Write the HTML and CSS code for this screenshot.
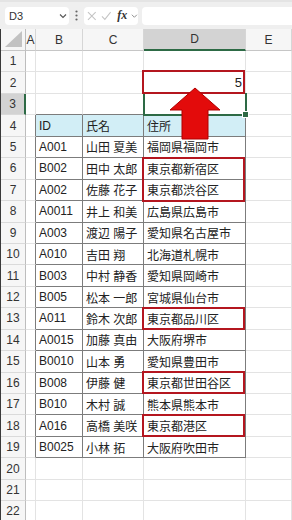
FILE: index.html
```html
<!DOCTYPE html>
<html lang="ja">
<head>
    <meta charset="UTF-8">
    <title>Sheet</title>
    <link rel="stylesheet" href="styles.css">
</head>
<body>
    <div class="toolbar">
        <div class="namebox">
            <span>D3</span>
            <svg class="chev" width="8" height="6" viewBox="0 0 8 6"><polyline points="1,1.5 4,4.5 7,1.5"/></svg>
        </div>
        <div class="dots">
            <svg width="3" height="11" viewBox="0 0 3 11"><circle cx="1.5" cy="1.5" r="1.1"/><circle cx="1.5" cy="5.5" r="1.1"/><circle cx="1.5" cy="9.5" r="1.1"/></svg>
        </div>
        <div class="fxbox">
            <svg class="mark" width="10" height="10" viewBox="0 0 10 10"><path d="M1 1 L9 9 M9 1 L1 9"/></svg>
            <svg class="mark" width="11" height="10" viewBox="0 0 11 10"><path d="M1 5.5 L4 8.5 L10 1"/></svg>
            <span class="fx">fx</span>
            <svg class="chev" width="7" height="6" viewBox="0 0 8 6"><polyline points="1,1.5 4,4.5 7,1.5"/></svg>
        </div>
        <div class="formula"></div>
    </div>

    <div class="sheet">
        <!-- column headers -->
        <div class="ch corner"><svg width="17" height="16" viewBox="0 0 17 16"><polygon points="0,16 17,16 17,0"/></svg></div>
        <div class="ch">A</div>
        <div class="ch">B</div>
        <div class="ch">C</div>
        <div class="ch sel">D</div>
        <div class="ch">E</div>

        <div class="rh">1</div><div class="c"></div><div class="c"></div><div class="c"></div><div class="c"></div><div class="c"></div>
        <div class="rh">2</div><div class="c"></div><div class="c"></div><div class="c"></div><div class="c num">5</div><div class="c"></div>
        <div class="rh sel">3</div><div class="c"></div><div class="c tt"></div><div class="c tt"></div><div class="c tt"></div><div class="c"></div>

        <div class="rh">4</div><div class="c ta"></div><div class="c t th">ID</div><div class="c t th">氏名</div><div class="c t th">住所</div><div class="c"></div>
        <div class="rh">5</div><div class="c ta"></div><div class="c t">A001</div><div class="c t">山田 夏美</div><div class="c t">福岡県福岡市</div><div class="c"></div>
        <div class="rh">6</div><div class="c ta"></div><div class="c t">B002</div><div class="c t">田中 太郎</div><div class="c t">東京都新宿区</div><div class="c"></div>
        <div class="rh">7</div><div class="c ta"></div><div class="c t">A002</div><div class="c t">佐藤 花子</div><div class="c t">東京都渋谷区</div><div class="c"></div>
        <div class="rh">8</div><div class="c ta"></div><div class="c t">A0011</div><div class="c t">井上 和美</div><div class="c t">広島県広島市</div><div class="c"></div>
        <div class="rh">9</div><div class="c ta"></div><div class="c t">A003</div><div class="c t">渡辺 陽子</div><div class="c t">愛知県名古屋市</div><div class="c"></div>
        <div class="rh">10</div><div class="c ta"></div><div class="c t">A010</div><div class="c t">吉田 翔</div><div class="c t">北海道札幌市</div><div class="c"></div>
        <div class="rh">11</div><div class="c ta"></div><div class="c t">B003</div><div class="c t">中村 静香</div><div class="c t">愛知県岡崎市</div><div class="c"></div>
        <div class="rh">12</div><div class="c ta"></div><div class="c t">B005</div><div class="c t">松本 一郎</div><div class="c t">宮城県仙台市</div><div class="c"></div>
        <div class="rh">13</div><div class="c ta"></div><div class="c t">A011</div><div class="c t">鈴木 次郎</div><div class="c t">東京都品川区</div><div class="c"></div>
        <div class="rh">14</div><div class="c ta"></div><div class="c t">A0015</div><div class="c t">加藤 真由</div><div class="c t">大阪府堺市</div><div class="c"></div>
        <div class="rh">15</div><div class="c ta"></div><div class="c t">B0010</div><div class="c t">山本 勇</div><div class="c t">愛知県豊田市</div><div class="c"></div>
        <div class="rh">16</div><div class="c ta"></div><div class="c t">B008</div><div class="c t">伊藤 健</div><div class="c t">東京都世田谷区</div><div class="c"></div>
        <div class="rh">17</div><div class="c ta"></div><div class="c t">B010</div><div class="c t">木村 誠</div><div class="c t">熊本県熊本市</div><div class="c"></div>
        <div class="rh">18</div><div class="c ta"></div><div class="c t">A016</div><div class="c t">高橋 美咲</div><div class="c t">東京都港区</div><div class="c"></div>
        <div class="rh">19</div><div class="c ta"></div><div class="c t">B0025</div><div class="c t">小林 拓</div><div class="c t">大阪府吹田市</div><div class="c"></div>

        <div class="rh">20</div><div class="c"></div><div class="c"></div><div class="c"></div><div class="c"></div><div class="c"></div>
        <div class="rh">21</div><div class="c"></div><div class="c"></div><div class="c"></div><div class="c"></div><div class="c"></div>
        <div class="rh">22</div><div class="c"></div><div class="c"></div><div class="c"></div><div class="c"></div><div class="c"></div>

        <!-- annotations over the grid -->
        <div class="active"><span class="handle"></span></div>
        <div class="mark-box box-d2"></div>
        <div class="mark-box box-d6"></div>
        <div class="mark-box box-d13"></div>
        <div class="mark-box box-d16"></div>
        <div class="mark-box box-d18"></div>
        <svg class="arrow" width="54" height="54" viewBox="0 0 54 54">
            <polygon points="27,1 52,23 40,23 40,52 14,52 14,23 2,23"/>
        </svg>
    </div>
</body>
</html>
```

FILE: styles.css
```css
html, body {
    margin: 0;
    overflow: hidden;
}

body {
    width: 292px;
    height: 520px;
    background-color: #ffffff;
    font-family: "Liberation Sans", "Noto Sans CJK JP", sans-serif;
    font-size: 12px;
    color: #222;
}

/* Formula bar */
.toolbar {
    display: flex;
    align-items: center;
    height: 29px;
    padding-left: 5px;
    box-sizing: border-box;
    background-color: #efefef;
    border-top: 2px solid #e4e4e4;
}

.namebox {
    display: flex;
    align-items: center;
    justify-content: space-between;
    width: 64px;
    height: 18px;
    padding: 0 2px 0 4px;
    box-sizing: border-box;
    background-color: #fff;
    border-radius: 4px;
    font-size: 11px;
    color: #333;
}

.chev polyline {
    fill: none;
    stroke: #555;
    stroke-width: 1.1;
}

.dots {
    width: 15px;
    display: flex;
    justify-content: center;
}

.dots circle {
    fill: #666;
}

.fxbox {
    display: flex;
    align-items: center;
    gap: 4px;
    width: 54px;
    height: 18px;
    padding-left: 3px;
    box-sizing: border-box;
    background-color: #fff;
    border-radius: 4px;
}

.mark path {
    fill: none;
    stroke: #c4c4c4;
    stroke-width: 1.1;
}

.fx {
    font-family: "Liberation Serif", serif;
    font-style: italic;
    font-weight: bold;
    font-size: 12px;
    color: #333;
    margin-left: 2px;
}

.fxbox .chev polyline {
    stroke: #888;
}

.formula {
    flex: 1;
    height: 18px;
    margin-left: 4px;
    background-color: #fff;
    border-radius: 4px 0 0 4px;
}

/* Grid */
.sheet {
    position: relative;
    display: grid;
    grid-template-columns: 25px 10px 47px 61px 102px 1fr;
    grid-template-rows: 22px repeat(22, 21.45px);
    border-left: 1px solid #3a3a3a;
}

.ch, .rh, .c {
    box-sizing: border-box;
    overflow: hidden;
    white-space: nowrap;
}

.ch {
    display: flex;
    align-items: center;
    justify-content: center;
    background-color: #f6f6f6;
    border-right: 1px solid #d6d6d6;
    border-bottom: 1px solid #c6c6c6;
    color: #333;
    font-size: 12px;
}

.ch.corner {
    justify-content: flex-end;
    align-items: flex-end;
    padding: 0 3px 3px 0;
    border-right-color: #bdbdbd;
}

.corner polygon {
    fill: #c2c2c2;
}

.ch.sel {
    background-color: #d3d3d3;
    border-bottom: 2px solid #2d6a45;
}

.rh {
    display: flex;
    align-items: center;
    justify-content: center;
    background-color: #f6f6f6;
    border-right: 1px solid #bdbdbd;
    border-bottom: 1px solid #dadada;
    color: #333;
    font-size: 12px;
}

.rh.sel {
    background-color: #d3d3d3;
    border-right: 2px solid #2d6a45;
}

.c {
    display: flex;
    align-items: center;
    padding-left: 3px;
    border-right: 1px solid #e3e3e3;
    border-bottom: 1px solid #e3e3e3;
}

.c.num {
    justify-content: flex-end;
    padding-right: 3px;
    font-size: 13px;
}

/* Table B4:D19 */
.c.t {
    border-right-color: #7c7c7c;
    border-bottom-color: #7c7c7c;
}

.c.ta {
    border-right-color: #7c7c7c;
}

.c.tt {
    border-bottom-color: #7c7c7c;
}

.c.th {
    background-color: #d2eef6;
}

/* Overlays */
.active {
    position: absolute;
    left: 142px;
    top: 64px;
    width: 104px;
    height: 23px;
    box-sizing: border-box;
    border: 2px solid #2d6a45;
    border-top-width: 1px;
}

.handle {
    position: absolute;
    right: -4px;
    bottom: -4px;
    width: 5px;
    height: 5px;
    background-color: #2d6a45;
    border: 1px solid #fff;
}

.mark-box {
    position: absolute;
    left: 141px;
    width: 103px;
    box-sizing: border-box;
    border: 2px solid #b4161f;
}

.box-d2 {
    top: 41px;
    height: 24px;
}

.box-d6 {
    top: 127.5px;
    height: 45.5px;
}

.box-d13 {
    top: 277.5px;
    height: 23.5px;
}

.box-d16 {
    top: 341.5px;
    height: 23.5px;
}

.box-d18 {
    top: 384.5px;
    height: 23.5px;
}

.arrow {
    position: absolute;
    left: 167px;
    top: 58px;
}

.arrow polygon {
    fill: #e30b0b;
    stroke: #b00000;
    stroke-width: 1;
}
```
